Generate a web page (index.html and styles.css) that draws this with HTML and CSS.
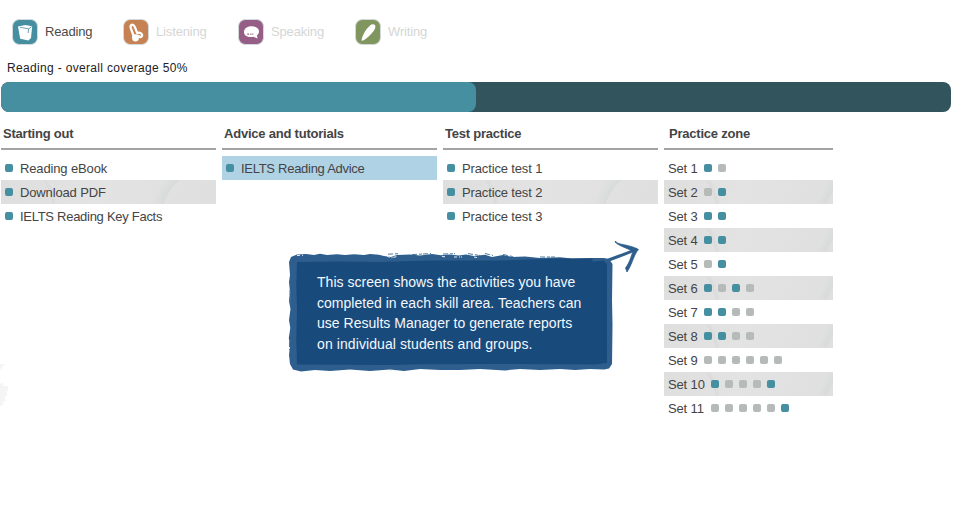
FILE: index.html
```html
<!DOCTYPE html>
<html lang="en">
<head>
<meta charset="utf-8">
<title>Progress – Reading</title>
<link rel="stylesheet" href="styles.css">
</head>
<body>
<nav class="skills">
  <a class="skill skill-reading active"><svg class="skill-icon" viewBox="0 0 28 28"><rect class="tile reading" x="1.5" y="1.5" width="25" height="25" rx="7"/><path class="white" d="M7 8.6L14.5 7L21.2 8.2L20 20L17.4 22.6L9.2 20.7Z"/><path class="book-line" d="M9 9.3L17.5 10.8L20.6 8.8M17.5 10.8L17.2 15"/></svg><span class="label">Reading</span></a>
  <a class="skill skill-listening"><svg class="skill-icon" viewBox="0 0 28 28"><rect class="tile listening" x="1.5" y="1.5" width="25" height="25" rx="7"/><path class="headband" d="M12 19L8.8 10.2C7.7 6.5 11 5.5 12.7 8.7L15.2 15.2C18 13.7 21 16.2 19.7 18.3C18.8 19.7 17.3 19 16.7 18"/><ellipse class="white" cx="13.5" cy="19.8" rx="3.5" ry="3.6"/></svg><span class="label">Listening</span></a>
  <a class="skill skill-speaking"><svg class="skill-icon" viewBox="0 0 28 28"><rect class="tile speaking" x="1.5" y="1.5" width="25" height="25" rx="7"/><path class="white" d="M14.5 8.2C18.8 8.2 22 10.2 22 13.3C22 15.2 21.2 16.5 20 17.3L20.5 20.6L16.5 18.8C11 19.8 7 17.5 7 14.2C7 10.4 10 8.2 14.5 8.2Z"/><path class="bubble-dots" d="M10.2 16.2H12M13.2 16.2H14.5M15.3 16.2H16.3"/></svg><span class="label">Speaking</span></a>
  <a class="skill skill-writing"><svg class="skill-icon" viewBox="0 0 28 28"><rect class="tile writing" x="1.5" y="1.5" width="25" height="25" rx="7"/><path class="white" d="M7.5 22.8C7.8 18.4 11.2 11.7 16 7.4C17.8 5.8 21.7 5.8 21.4 8.9C21.2 12.8 13.7 19.8 9.1 22.6Z"/></svg><span class="label">Writing</span></a>
</nav>
<h1 class="coverage-title">Reading - overall coverage 50%</h1>
<div class="coverage-bar"><div class="coverage-fill"></div></div>
<main class="columns">
  <section class="column">
    <h2 class="col-title">Starting out</h2>
    <ul class="rows">
      <li class="row"><i class="dot done"></i><span>Reading eBook</span></li>
      <li class="row shaded"><i class="dot done"></i><span>Download PDF</span></li>
      <li class="row"><i class="dot done"></i><span class="tight">IELTS Reading Key Facts</span></li>
    </ul>
  </section>
  <section class="column">
    <h2 class="col-title">Advice and tutorials</h2>
    <ul class="rows">
      <li class="row selected"><i class="dot done"></i><span class="tight">IELTS Reading Advice</span></li>
    </ul>
  </section>
  <section class="column">
    <h2 class="col-title">Test practice</h2>
    <ul class="rows">
      <li class="row"><i class="dot done"></i><span>Practice test 1</span></li>
      <li class="row shaded"><i class="dot done"></i><span>Practice test 2</span></li>
      <li class="row"><i class="dot done"></i><span>Practice test 3</span></li>
    </ul>
  </section>
  <section class="column zone">
    <h2 class="col-title">Practice zone</h2>
    <ul class="rows">
      <li class="row set"><span class="name">Set 1</span><i class="dot done"></i><i class="dot"></i></li>
      <li class="row set shaded"><span class="name">Set 2</span><i class="dot"></i><i class="dot done"></i></li>
      <li class="row set"><span class="name">Set 3</span><i class="dot done"></i><i class="dot done"></i></li>
      <li class="row set shaded"><span class="name">Set 4</span><i class="dot done"></i><i class="dot done"></i></li>
      <li class="row set"><span class="name">Set 5</span><i class="dot"></i><i class="dot done"></i></li>
      <li class="row set shaded"><span class="name">Set 6</span><i class="dot done"></i><i class="dot"></i><i class="dot done"></i><i class="dot"></i></li>
      <li class="row set"><span class="name">Set 7</span><i class="dot done"></i><i class="dot done"></i><i class="dot"></i><i class="dot"></i></li>
      <li class="row set shaded"><span class="name">Set 8</span><i class="dot done"></i><i class="dot done"></i><i class="dot"></i><i class="dot"></i></li>
      <li class="row set"><span class="name">Set 9</span><i class="dot"></i><i class="dot"></i><i class="dot"></i><i class="dot"></i><i class="dot"></i><i class="dot"></i></li>
      <li class="row set shaded"><span class="name wide">Set 10</span><i class="dot done"></i><i class="dot"></i><i class="dot"></i><i class="dot"></i><i class="dot done"></i></li>
      <li class="row set"><span class="name wide">Set 11</span><i class="dot"></i><i class="dot"></i><i class="dot"></i><i class="dot"></i><i class="dot"></i><i class="dot done"></i></li>
    </ul>
  </section>
</main>
<aside class="callout">
  <svg class="callout-shape" viewBox="284 234 364 144">
    <path class="brush" d="M289 262L291 257L297 254.5L306 254L314 255L320 253.7L327 255L337 254.2L345 255L354 254.2L364 255L370 254L379 254.7L384 256L391 257L397 255L410 254.5L420 255.5L432 254L441 255.3L449 254.4L459 255.5L466 254.5L474 256L485 254.7L492 257L503 255L512 257L525 256.4L540 258L560 257.3L572 258.5L590 258L604 258L609 259L612.5 264L612 300L612.5 325L612 364L609 368.5L604 369.5L590 369L575 370L560 369L540 370L520 369L505 370.4L480 369L460 370L440 370L420 369L404 371L390 369.5L370 371L350 369.5L330 371L315 370L301 371.5L293 369.5L290 364L289 355L290 346L288.8 338L290.3 328L289 320L290.5 309L289 301L290 292L289 282L290 275Z"/>
    <path class="panel" d="M297 262L340 261.5L380 262L430 260.5L500 260.5L560 258.5L593 258.5L592 261.5L604 260.5L607 264L607 363L595 364.5L500 364L420 364.3L390 365L297 364.5L296.3 340L297 310L296.3 285Z"/>
    <path class="frays-light" d="M387 256L391 258L397 256.5M442 256.5L447 257M454 257L462 257M474 257L479 258M297 255.5L303 255.3M389 370.8H397"/>
    <path class="frays" d="M388 254.2L398 253.7M412 254.6L431 253.6M443 254L455 253.7M468 253.6L480 255.5M485 253.5L493 255.4M503 254.5L514 256.8M540 257H555M290 290V303M289.5 342V350"/>
    <path class="arrow-head" d="M615.5 241C616 245 629 244 638.5 249.5C634 254 632 265 627 272L625.5 268C630 262 631 256 633 251.5C627 248 619 246 615 242Z"/>
    <path class="arrow-shaft" d="M605 261.5C614 257.5 624 255 637 249"/>
  </svg>
  <p class="callout-text">This screen shows the activities you have<br>completed in each skill area. Teachers can<br>use Results Manager to generate reports<br><span class="last-line">on individual students and groups.</span></p>
</aside>
<svg class="smudge" viewBox="0 0 8 44"><path d="M0 0H5L1 5L0 6ZM0 20L3 18V22H8V27L5 28H7V32H5V36H7L3 38V41L0 42Z"/></svg>
</body>
</html>
```
FILE: styles.css
```css
* { box-sizing: border-box; }
body {
  margin: 0;
  width: 954px;
  height: 516px;
  position: relative;
  overflow: hidden;
  background: #fff;
  color: #444;
  font: 13px/24px "Liberation Sans", Arial, sans-serif;
}
.skills { display: flex; height: 46px; padding: 18px 0 0 11px; }
.skill { display: flex; align-items: center; height: 28px; color: #d5d6d6; }
.skill-reading { width: 111px; }
.skill-listening { width: 115px; }
.skill-speaking { width: 117px; }
.skill.active { color: #4a4a4a; }
.skill-icon { width: 28px; height: 28px; margin-right: 6px; flex: none; }
.label { letter-spacing: -0.15px; }
.tile { stroke: #d2dadb; stroke-width: 1; }
.reading { fill: #458fa0; }
.listening { fill: #c68253; }
.speaking { fill: #965e86; }
.writing { fill: #81965f; }
.white { fill: #fff; }
.book-line { fill: none; stroke: #6ba5b2; stroke-width: 1; }
.headband { fill: none; stroke: #fff; stroke-width: 2.3; stroke-linejoin: round; stroke-linecap: round; }
.bubble-dots { stroke: #965e86; stroke-width: 1.3; }
.coverage-title {
  margin: 13px 0 5px;
  padding-left: 7px;
  font-size: 12px;
  line-height: 18px;
  font-weight: 400;
  letter-spacing: 0.33px;
  color: #222;
}
.coverage-bar { width: 950px; height: 30px; margin-left: 1px; border-radius: 8px; background: #31545d; overflow: hidden; }
.coverage-fill { width: 50%; height: 100%; border-radius: 8px; background: #458fa0; }
.columns { display: grid; grid-template-columns: 215px 215px 215px 169px; gap: 6px; margin: 9px 0 0 1px; align-items: start; }
.col-title { margin: 0 0 6px; height: 29px; padding: 0 0 0 2px; border-bottom: 2px solid #a3a3a4; font-size: 13px; line-height: 25px; font-weight: 700; letter-spacing: -0.22px; }
.zone .col-title { padding-left: 5px; }
.rows { list-style: none; margin: 0; padding: 0; }
.row { display: flex; align-items: center; height: 24px; padding-left: 4px; line-height: 24px; letter-spacing: -0.14px; }
.row span { padding-top: 2px; }
.row .tight { letter-spacing: -0.28px; }
.row .dot { margin-right: 7px; }
.dot { width: 8px; height: 8px; flex: none; border-radius: 2px; background: #b6bab9; }
.dot.done { background: #458fa0; }
.selected { background: #afd2e5; }
.shaded {
  background:
    radial-gradient(ellipse 42px 65px at 20px 38px, transparent 78%, #d9dada 79%, #e3e3e3 91%, transparent 92%),
    radial-gradient(ellipse 60px 75px at 205px 48px, transparent 77%, #d9dbdb 78%, #dfe0e0 93%, transparent 94%),
    linear-gradient(110deg, #dedede, #e3e3e3 45%, #dfdfdf);
}
.row.set .dot { margin-right: 6px; }
.name { width: 36px; flex: none; }
.name.wide { width: 43px; }
.callout { position: absolute; left: 284px; top: 234px; width: 364px; height: 144px; padding: 38px 0 0 33px; }
.callout-shape { position: absolute; left: 0; top: 0; width: 364px; height: 144px; }
.callout-text { position: relative; margin: 0; color: #f4f8fc; font-size: 14px; line-height: 20.5px; white-space: nowrap; letter-spacing: 0.02px; }
.last-line { letter-spacing: 0.09px; }
.brush { fill: #2e5e8d; }
.panel { fill: #184a7c; }
.frays { fill: none; stroke: #4a779f; stroke-width: 1; stroke-dasharray: 5 2 3 1; }
.frays-light { fill: none; stroke: #e4edf4; stroke-width: 1; stroke-dasharray: 3 2 1 1; }
.arrow-shaft { fill: none; stroke: #2e5e8d; stroke-width: 3; }
.arrow-head { fill: #2e5e8d; stroke: #2e5e8d; stroke-width: 0.8; stroke-linejoin: round; }
.smudge { position: absolute; left: 0; top: 364px; width: 8px; height: 44px; fill: #f5f5f5; }
```
